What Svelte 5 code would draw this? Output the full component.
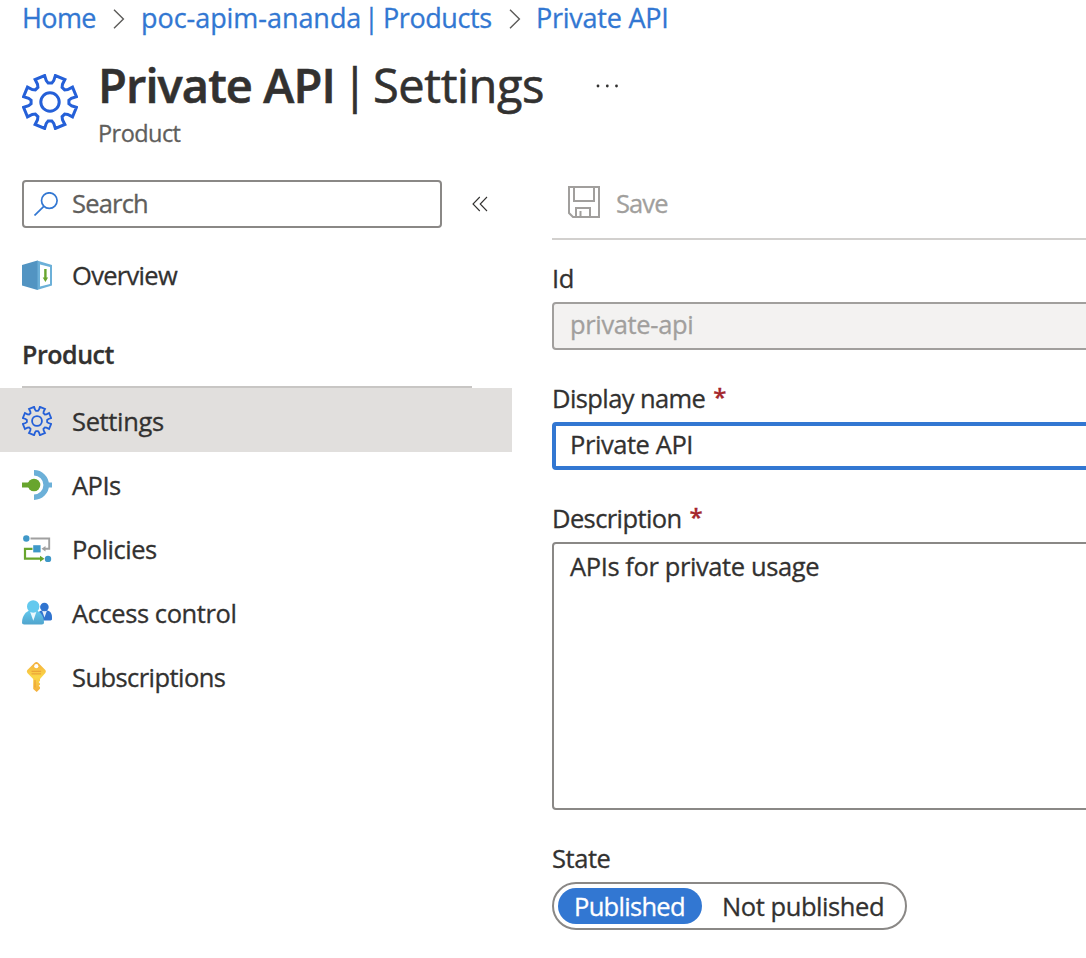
<script>
  const items = [
    { icon: 'gear', label: 'Settings', selected: true, tracking: -0.35 },
    { icon: 'api', label: 'APIs', tracking: -0.5 },
    { icon: 'policy', label: 'Policies', tracking: -0.5 },
    { icon: 'people', label: 'Access control', tracking: -0.42 },
    { icon: 'key', label: 'Subscriptions', tracking: -0.57 }
  ];
  let published = $state(true);

  // Outline of an eight-toothed cog in a 56-unit box.
  const point = (radius, degrees) => {
    const a = (degrees * Math.PI) / 180;
    return `${(28 + radius * Math.cos(a)).toFixed(2)} ${(28 + radius * Math.sin(a)).toFixed(2)}`;
  };
  const cog =
    'M' +
    Array.from({ length: 8 }, (_, i) => {
      const c = i * 45 + 22.5;
      return [point(21.7, c - 12.6), point(27, c - 11), point(27, c + 11), point(21.7, c + 12.6), point(19, c + 17), point(19, c + 28)].join('L');
    }).join('L') +
    'Z';
</script>

{#snippet gear(size, weight)}
  <svg width={size} height={size} viewBox="0 0 56 56" fill="none" stroke="#2560d8" stroke-width={weight}>
    <path d={cog} />
    <circle cx="28" cy="28" r="9.2" />
  </svg>
{/snippet}

{#snippet chevron()}
  <svg class="chevron" width="12" height="20" viewBox="0 0 12 20" fill="none" stroke="#5c5b59" stroke-width="1.4"><path d="M1 .7 10.4 10 1 19.3" /></svg>
{/snippet}

<div class="page">
  <nav class="crumbs">
    <a class="c1" href="#home">Home</a>
    {@render chevron()}
    <a class="c2" href="#products"><span class="svc">poc-apim-ananda</span><span class="bar">|</span><span class="prods">Products</span></a>
    {@render chevron()}
    <a class="c3" href="#private">Private API</a>
  </nav>

  <header>
    <div class="emblem">{@render gear(56, 3)}</div>
    <div class="heading">
      <div class="title-row">
        <h1><strong>Private API</strong><span class="bar">|</span><span class="rest">Settings</span></h1>
        <svg class="more" width="24" height="4" viewBox="0 0 24 4" fill="#323130"><circle cx="2" cy="2" r="1.4" /><circle cx="11.3" cy="2" r="1.4" /><circle cx="20.5" cy="2" r="1.4" /></svg>
      </div>
      <div class="subtitle">Product</div>
    </div>
  </header>

  <div class="body">
    <aside>
      <div class="search-row">
        <div class="search">
          <svg width="24" height="24" viewBox="0 0 24 24" fill="none" stroke="#3277d2" stroke-width="1.7"><circle cx="15.3" cy="8.6" r="7.8" /><path d="M9.8 14.3.5 23.5" /></svg>
          <span>Search</span>
        </div>
        <svg class="collapse" width="16" height="16" viewBox="0 0 16 16" fill="none" stroke="#323130" stroke-width="1.1"><path d="M7.8 1 1 8l6.8 7M15 1 8.2 8l6.8 7" /></svg>
      </div>

      <div class="item overview">
        <div class="icon">
          <svg width="30" height="30" viewBox="0 0 30 30">
            <path d="M15 .5 30 5v20.5L15 30z" fill="#6cb0d8" />
            <path d="M0 5 15.5.5V30L0 25.5z" fill="#5294c2" />
            <path d="M18 4.5 28 7v17l-10 2.5z" fill="#fff" />
            <path d="M22.2 9h2.4v8.5h1.5L23.4 22l-2.7-4.5h1.5z" fill="#68a52d" />
          </svg>
        </div>
        <span class="ov">Overview</span>
      </div>

      <div class="group"><h2>Product</h2></div>

      {#each items as item}
        <div class="item entry" class:selected={item.selected}>
          <div class="icon">
            {#if item.icon === 'gear'}
              {@render gear(30, 3.4)}
            {:else if item.icon === 'api'}
              <svg width="30" height="30" viewBox="0 0 30 30">
                <path d="M12 2.8a12.2 12.2 0 0 1 0 24.4" fill="none" stroke="#6cb0d8" stroke-width="5.6" />
                <path d="M26 12.5h4v5h-4z" fill="#6cb0d8" />
                <path d="M0 12.5h8v5H0z" fill="#68a52d" />
                <circle cx="12" cy="15" r="6.3" fill="#68a52d" />
              </svg>
            {:else if item.icon === 'policy'}
              <svg width="30" height="30" viewBox="0 0 30 30">
                <path d="M8.5 4.5h18.7v10.2H22" fill="none" stroke="#a0a0a0" stroke-width="1.9" />
                <path d="m23.5 12-4 2.7 4 2.7z" fill="#a0a0a0" />
                <path d="M10.5 14.8H3v9.9h15.5" fill="none" stroke="#68a52d" stroke-width="2.2" />
                <path d="m18 21.7 4.5 3-4.5 3z" fill="#68a52d" />
                <path d="M11.2 11.2h7.4v7.2h-7.4z" fill="#3f98c8" />
                <circle cx="4.3" cy="4.5" r="3.2" fill="#3f98c8" /><circle cx="26" cy="24.9" r="3.2" fill="#3f98c8" />
              </svg>
            {:else if item.icon === 'people'}
              <svg width="30" height="30" viewBox="0 0 30 30">
                <defs><linearGradient id="person" x1="0" y1="0" x2="0" y2="1"><stop offset="0" stop-color="#63c9ee" /><stop offset="1" stop-color="#51a5cd" /></linearGradient></defs>
                <path d="M15 22.400v-3.400c0-4.500 3-7 7.500-7s7.500 2.500 7.500 7v2c0 1-.6 1.400-1.500 1.400z" fill="#3074cf" />
                <path d="m20.200 13 2.300 6.500 2.300-6.500z" fill="#e5effa" />
                <circle cx="22.4" cy="9" r="4.3" fill="#3074cf" />
                <path d="M0 24.5C0 18 4 12 11 12S22 18 22 24.5c0 1.200-.8 1.900-2.200 1.900H2.200C.8 26.400 0 25.700 0 24.500z" fill="url(#person)" />
                <path d="m8 13.500 3.300 9.300 3.200-9.300z" fill="#eaf8fd" />
                <circle cx="11.2" cy="8.5" r="6.2" fill="#63c9ee" />
              </svg>
            {:else}
              <svg width="30" height="30" viewBox="0 0 30 30">
                <defs><linearGradient id="metal" x1="0" y1="0" x2="0" y2="1"><stop offset="0" stop-color="#f3ae3d" /><stop offset=".5" stop-color="#fbd748" /><stop offset="1" stop-color="#f3ae3d" /></linearGradient></defs>
                <path d="M12.7.8q1.700-1.600 3.400 0l7 7q1.500 1.700 0 3.400L18 17v2l-1.300 1.100L18 21.400v1.300l-1.300 1.100 1.300 1.300v1.700L14.700 30l-3.500-3V17L5.600 11.200q-1.500-1.700 0-3.400z" fill="url(#metal)" />
                <circle cx="14.3" cy="4.2" r="2.1" fill="#fff" />
                <path d="M9.5 9.3h9.600M9.500 11.900h9.600M13 18v7.500" stroke="#e99b35" stroke-width="1" />
              </svg>
            {/if}
          </div>
          <span class="name" style="letter-spacing: {item.tracking}px">{item.label}</span>
        </div>
      {/each}
    </aside>

    <main>
      <div class="toolbar">
        <svg width="32" height="32" viewBox="0 0 32 32" fill="none" stroke="#a19f9d" stroke-width="2"><path d="M1 1h30v30H5l-4-4zM6 1v14h20V1M8 31V22h14v9M12.5 25v6" /></svg>
        <span class="save">Save</span>
      </div>

      <div class="label first"><span>Id</span></div>
      <div class="field disabled"><span>private-api</span></div>

      <div class="label"><span class="dn">Display name</span><b>*</b></div>
      <div class="field focused"><span>Private API</span></div>

      <div class="label"><span class="de">Description</span><b>*</b></div>
      <div class="field area"><span>APIs for private usage</span></div>

      <div class="label"><span>State</span></div>
      <div class="toggle">
        <button class:on={published} onclick={() => (published = true)}>Published</button>
        <button class:on={!published} onclick={() => (published = false)}>Not published</button>
      </div>
    </main>
  </div>
</div>

<style>
  :global(body) { background: #fff; }
  .page {
    width: 1086px; height: 958px; overflow: hidden;
    font: 400 25.5px/36px 'Open Sans', sans-serif; color: #323130;
    letter-spacing: -0.43px; white-space: nowrap;
    -webkit-text-stroke: 0.3px currentColor;
  }
  .page :global(*) { box-sizing: border-box; }
  svg { display: block; flex: none; }
  .crumbs { display: flex; align-items: center; height: 36px; padding-left: 22px; font-size: 27px; line-height: 36px; }
  a { display: block; color: #3277d2; text-decoration: none; flex: none; }
  .c1 { width: 75px; letter-spacing: -0.6px; }
  .c2 { display: flex; width: 352px; }
  .svc { width: 223px; letter-spacing: -0.05px; }
  .crumbs .bar { width: 19px; }
  .c3 { letter-spacing: -0.25px; }
  .chevron { margin: 1px 16px 0 16px; }
  .c2 + .chevron { margin-right: 15px; }
  header { display: flex; height: 144px; padding-left: 22px; }
  .emblem { width: 76px; padding-top: 38px; }
  .title-row { display: flex; align-items: center; height: 60px; margin-top: 19px; }
  h1 { display: flex; width: 498px; margin: 0; font-size: 47px; line-height: 60px; font-weight: 400; letter-spacing: -0.4px; -webkit-text-stroke-width: 0.6px; }
  strong { width: 244px; font-weight: 600; letter-spacing: -0.9px; }
  h1 .bar { width: 31px; }
  .more { margin-top: 2px; }
  .subtitle { font-size: 23.5px; line-height: 36px; color: #605e5c; letter-spacing: -0.55px; }
  .body { display: flex; }
  aside { width: 512px; margin-right: 40px; flex: none; }
  .search-row { display: flex; align-items: center; height: 48px; padding-left: 22px; }
  .search { display: flex; align-items: center; width: 420px; height: 48px; padding-left: 10px; border: 2px solid #8a8886; border-radius: 4px; color: #605e5c; }
  .search span { margin: -2px 0 0 14px; letter-spacing: -0.8px; }
  .collapse { margin-left: 30px; }
  .item { display: flex; align-items: center; height: 64px; padding-left: 22px; }
  .overview { margin-top: 15px; }
  .ov { letter-spacing: -0.7px; }
  .icon { width: 50px; flex: none; }
  .entry { padding-top: 2px; }
  .name { margin-top: -1px; }
  .selected { background: #e1dfdd; }
  .group { width: 450px; height: 80px; margin: 1px 0 0 22px; padding-top: 28px; border-bottom: 2px solid #c8c6c4; }
  h2 { margin: 0; font-size: 25px; line-height: 36px; font-weight: 600; letter-spacing: -0.45px; }
  main { width: 534px; flex: none; }
  .toolbar { display: flex; align-items: center; height: 60px; padding: 0 0 14px 16px; border-bottom: 2px solid #d2d0ce; color: #a19f9d; }
  .save { margin: 2px 0 0 16px; letter-spacing: -0.9px; }
  .label { display: flex; align-items: center; height: 36px; margin-top: 30px; margin-bottom: 6px; }
  .first { margin-top: 20px; }
  .dn, .de { letter-spacing: -0.6px; }
  .label b { margin: 0 0 2px 8px; color: #a4262c; font-size: 24px; font-weight: 600; }
  .field { display: flex; align-items: center; height: 48px; width: 600px; padding: 0 0 4px 16px; border: 2px solid #8a8886; border-radius: 4px; }
  .disabled { background: #f3f2f1; border-color: #a19f9d; color: #a19f9d; letter-spacing: -0.35px; }
  .focused { border: 4px solid #3277d2; padding-left: 14px; }
  .area { height: 268px; align-items: flex-start; padding-top: 4px; letter-spacing: -0.4px; }
  .toggle { display: flex; width: 355px; height: 48px; padding: 4px; border: 2px solid #8a8886; border-radius: 24px; }
  button { height: 36px; padding: 0 0 0 16px; border: 0; border-radius: 18px; background: none; color: inherit; font: inherit; letter-spacing: inherit; text-align: left; }
  button:first-child { width: 144px; letter-spacing: -0.7px; }
  button:last-child { width: 199px; padding-left: 20px; }
  .on { background: #3277d2; color: #fff; }
</style>
